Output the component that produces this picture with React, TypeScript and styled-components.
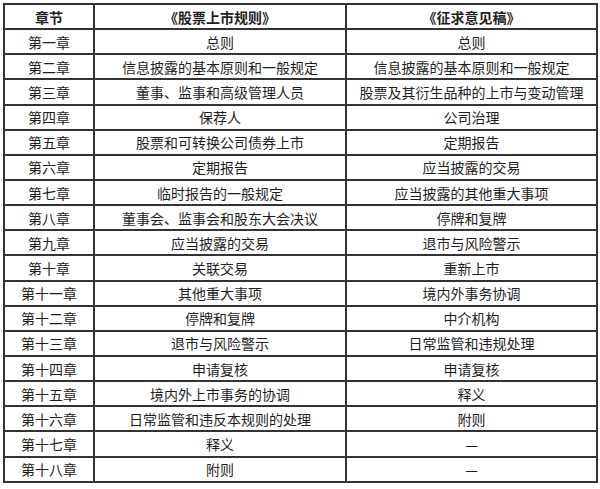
import React from "react";
import styled, { createGlobalStyle } from "styled-components";

const Global = createGlobalStyle`
  html, body { margin: 0; padding: 0; background: #fff; }
  body { font-family: "Noto Sans CJK SC", "Noto Sans", sans-serif; }
`;

const Page = styled.div`
  padding: 3px 0 0 3px;
  width: 600px;
  height: 489px;
  box-sizing: border-box;
`;

const Grid = styled.div`
  display: grid;
  grid-template-columns: 88px 250px 249px;
  grid-auto-rows: 23.15px;
  gap: 2px;
  padding: 2px;
  width: max-content;
  background: #333;
`;

const Cell = styled.div<{ $head?: boolean }>`
  background: #fff;
  display: flex;
  align-items: center;
  justify-content: center;
  font-size: 14px;
  line-height: 1;
  color: #1e1e1e;
  font-weight: ${(p) => (p.$head ? 700 : 400)};
  white-space: nowrap;
`;

const rows: [string, string, string][] = [
  ["第一章", "总则", "总则"],
  ["第二章", "信息披露的基本原则和一般规定", "信息披露的基本原则和一般规定"],
  ["第三章", "董事、监事和高级管理人员", "股票及其衍生品种的上市与变动管理"],
  ["第四章", "保荐人", "公司治理"],
  ["第五章", "股票和可转换公司债券上市", "定期报告"],
  ["第六章", "定期报告", "应当披露的交易"],
  ["第七章", "临时报告的一般规定", "应当披露的其他重大事项"],
  ["第八章", "董事会、监事会和股东大会决议", "停牌和复牌"],
  ["第九章", "应当披露的交易", "退市与风险警示"],
  ["第十章", "关联交易", "重新上市"],
  ["第十一章", "其他重大事项", "境内外事务协调"],
  ["第十二章", "停牌和复牌", "中介机构"],
  ["第十三章", "退市与风险警示", "日常监管和违规处理"],
  ["第十四章", "申请复核", "申请复核"],
  ["第十五章", "境内外上市事务的协调", "释义"],
  ["第十六章", "日常监管和违反本规则的处理", "附则"],
  ["第十七章", "释义", "—"],
  ["第十八章", "附则", "—"],
];

export default function App() {
  return (
    <>
      <Global />
      <Page>
        <Grid>
          <Cell $head>章节</Cell>
          <Cell $head>《股票上市规则》</Cell>
          <Cell $head>《征求意见稿》</Cell>
          {rows.map((r, i) => (
            <React.Fragment key={i}>
              <Cell>{r[0]}</Cell>
              <Cell>{r[1]}</Cell>
              <Cell>{r[2]}</Cell>
            </React.Fragment>
          ))}
        </Grid>
      </Page>
    </>
  );
}
